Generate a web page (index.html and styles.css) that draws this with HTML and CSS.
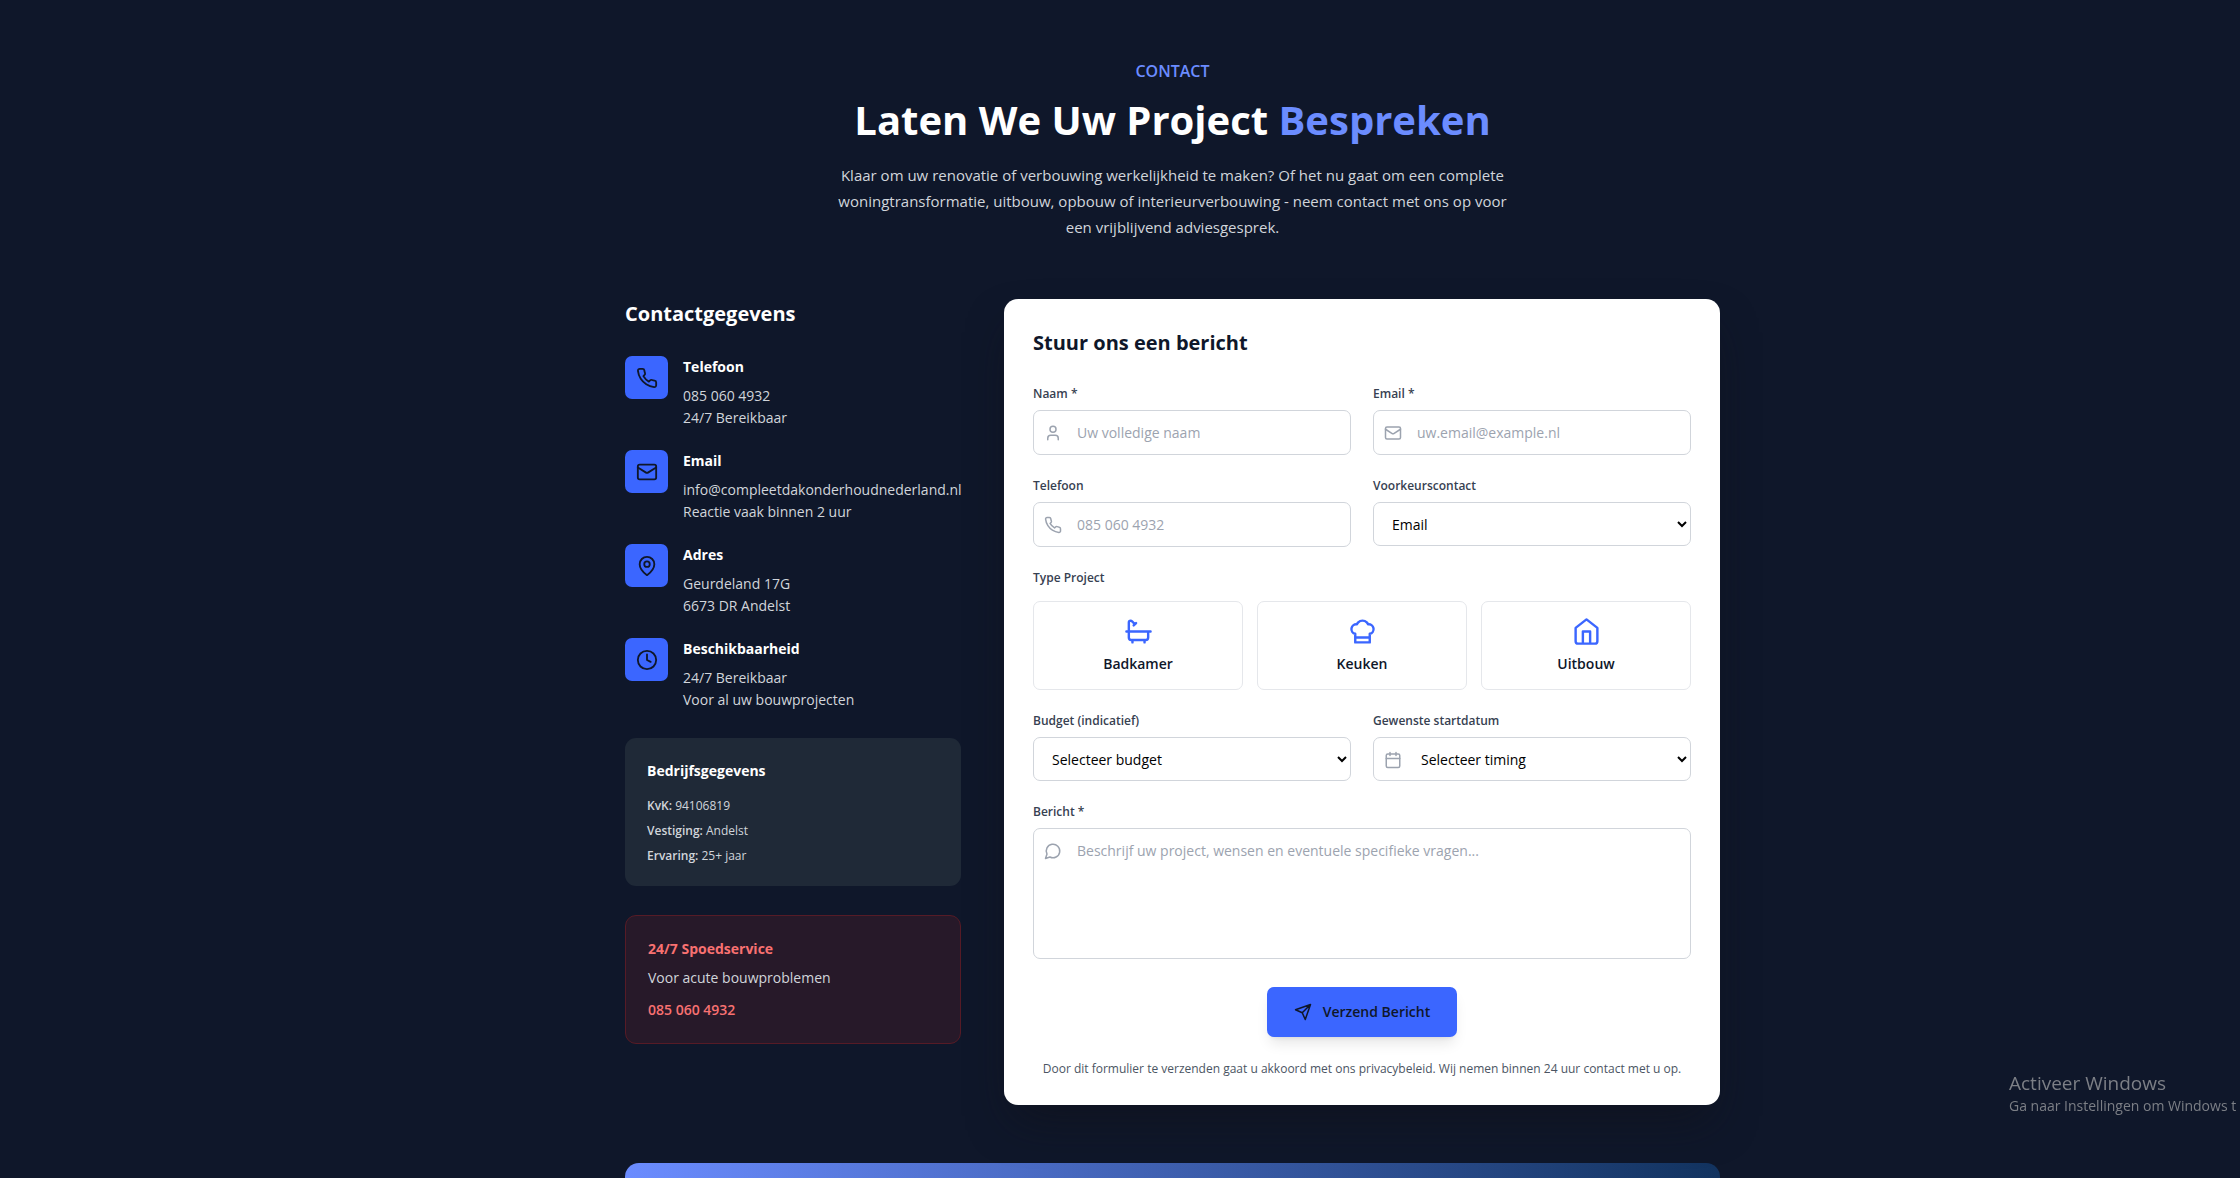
FILE: index.html
```html
<!DOCTYPE html>
<html lang="nl">
<head>
<meta charset="utf-8">
<meta name="viewport" content="width=device-width, initial-scale=1">
<title>Contact</title>
<link rel="stylesheet" href="styles.css">
</head>
<body>
<svg class="sprite" aria-hidden="true">
  <symbol id="i-phone" viewBox="0 0 24 24"><path d="M22 16.92v3a2 2 0 0 1-2.18 2 19.79 19.79 0 0 1-8.63-3.07 19.5 19.5 0 0 1-6-6 19.79 19.79 0 0 1-3.07-8.67A2 2 0 0 1 4.11 2h3a2 2 0 0 1 2 1.72 12.84 12.84 0 0 0 .7 2.81 2 2 0 0 1-.45 2.11L8.09 9.91a16 16 0 0 0 6 6l1.27-1.27a2 2 0 0 1 2.11-.45 12.84 12.84 0 0 0 2.81.7A2 2 0 0 1 22 16.92z"/></symbol>
  <symbol id="i-mail" viewBox="0 0 24 24"><rect x="2" y="4" width="20" height="16" rx="2"/><path d="m22 7-8.97 5.7a1.94 1.94 0 0 1-2.06 0L2 7"/></symbol>
  <symbol id="i-pin" viewBox="0 0 24 24"><path d="M20 10c0 6-8 12-8 12s-8-6-8-12a8 8 0 0 1 16 0Z"/><circle cx="12" cy="10" r="3"/></symbol>
  <symbol id="i-clock" viewBox="0 0 24 24"><circle cx="12" cy="12" r="10"/><path d="M12 6v6l4 2"/></symbol>
  <symbol id="i-user" viewBox="0 0 24 24"><path d="M19 21v-2a4 4 0 0 0-4-4H9a4 4 0 0 0-4 4v2"/><circle cx="12" cy="7" r="4"/></symbol>
  <symbol id="i-calendar" viewBox="0 0 24 24"><rect x="3" y="4" width="18" height="18" rx="2"/><path d="M16 2v4M8 2v4M3 10h18"/></symbol>
  <symbol id="i-message" viewBox="0 0 24 24"><path d="M7.9 20A9 9 0 1 0 4 16.1L2 22Z"/></symbol>
  <symbol id="i-bath" viewBox="0 0 24 24"><path d="M9 6 6.5 3.5a1.5 1.5 0 0 0-1-.5C4.683 3 4 3.683 4 4.5V17a2 2 0 0 0 2 2h12a2 2 0 0 0 2-2v-5M10 5 8 7M2 12h20M7 19v2M17 19v2"/></symbol>
  <symbol id="i-chef" viewBox="0 0 24 24"><path d="M6 13.87A4 4 0 0 1 7.41 6a5.11 5.11 0 0 1 1.05-1.54 5 5 0 0 1 7.08 0A5.11 5.11 0 0 1 16.59 6 4 4 0 0 1 18 13.87V21H6ZM6 17h12"/></symbol>
  <symbol id="i-home" viewBox="0 0 24 24"><path d="m3 9 9-7 9 7v11a2 2 0 0 1-2 2H5a2 2 0 0 1-2-2zM9 22V12h6v10"/></symbol>
  <symbol id="i-send" viewBox="0 0 24 24"><path d="m22 2-7 20-4-9-9-4ZM22 2 11 13"/></symbol>
</svg>

<main class="page">
  <header class="intro">
    <p class="eyebrow">CONTACT</p>
    <h1 class="title">Laten We Uw Project <span class="accent">Bespreken</span></h1>
    <p class="lead">Klaar om uw renovatie of verbouwing werkelijkheid te maken? Of het nu gaat om een complete woningtransformatie, uitbouw, opbouw of interieurverbouwing - neem contact met ons op voor een vrijblijvend adviesgesprek.</p>
  </header>

  <div class="columns">
    <section class="info">
      <h2 class="heading">Contactgegevens</h2>
      <ul class="contacts">
        <li class="contact">
          <span class="badge"><svg class="icon icon-md"><use href="#i-phone"/></svg></span>
          <div><h3 class="contact-title">Telefoon</h3><p>085 060 4932</p><p>24/7 Bereikbaar</p></div>
        </li>
        <li class="contact">
          <span class="badge"><svg class="icon icon-md"><use href="#i-mail"/></svg></span>
          <div><h3 class="contact-title">Email</h3><p>info@compleetdakonderhoudnederland.nl</p><p>Reactie vaak binnen 2 uur</p></div>
        </li>
        <li class="contact">
          <span class="badge"><svg class="icon icon-md"><use href="#i-pin"/></svg></span>
          <div><h3 class="contact-title">Adres</h3><p>Geurdeland 17G</p><p>6673 DR Andelst</p></div>
        </li>
        <li class="contact">
          <span class="badge"><svg class="icon icon-md"><use href="#i-clock"/></svg></span>
          <div><h3 class="contact-title">Beschikbaarheid</h3><p>24/7 Bereikbaar</p><p>Voor al uw bouwprojecten</p></div>
        </li>
      </ul>

      <div class="company">
        <h3 class="company-title">Bedrijfsgegevens</h3>
        <p><strong>KvK:</strong> 94106819</p>
        <p><strong>Vestiging:</strong> Andelst</p>
        <p><strong>Ervaring:</strong> 25+ jaar</p>
      </div>

      <div class="urgent">
        <h3 class="urgent-title">24/7 Spoedservice</h3>
        <p class="urgent-text">Voor acute bouwproblemen</p>
        <a class="urgent-phone" href="tel:0850604932">085 060 4932</a>
      </div>
    </section>

    <form class="card">
      <h2 class="heading">Stuur ons een bericht</h2>
      <div class="fields">
        <div class="field">
          <label for="naam">Naam *</label>
          <div class="control"><svg class="icon icon-sm"><use href="#i-user"/></svg><input class="box with-icon" id="naam" type="text" placeholder="Uw volledige naam"></div>
        </div>
        <div class="field">
          <label for="email">Email *</label>
          <div class="control"><svg class="icon icon-sm"><use href="#i-mail"/></svg><input class="box with-icon" id="email" type="email" placeholder="uw.email@example.nl"></div>
        </div>
        <div class="field">
          <label for="telefoon">Telefoon</label>
          <div class="control"><svg class="icon icon-sm"><use href="#i-phone"/></svg><input class="box with-icon" id="telefoon" type="tel" placeholder="085 060 4932"></div>
        </div>
        <div class="field">
          <label for="voorkeur">Voorkeurscontact</label>
          <select class="box" id="voorkeur"><option>Email</option><option>Telefoon</option></select>
        </div>
        <fieldset class="types">
          <legend>Type Project</legend>
          <div class="type-row">
            <button class="type" type="button"><svg class="icon icon-lg"><use href="#i-bath"/></svg>Badkamer</button>
            <button class="type" type="button"><svg class="icon icon-lg"><use href="#i-chef"/></svg>Keuken</button>
            <button class="type" type="button"><svg class="icon icon-lg"><use href="#i-home"/></svg>Uitbouw</button>
          </div>
        </fieldset>
        <div class="field">
          <label for="budget">Budget (indicatief)</label>
          <select class="box" id="budget"><option>Selecteer budget</option></select>
        </div>
        <div class="field">
          <label for="start">Gewenste startdatum</label>
          <div class="control"><svg class="icon icon-sm"><use href="#i-calendar"/></svg><select class="box with-icon" id="start"><option>Selecteer timing</option></select></div>
        </div>
        <div class="field wide">
          <label for="bericht">Bericht *</label>
          <div class="control"><svg class="icon icon-sm"><use href="#i-message"/></svg><textarea class="box with-icon" id="bericht" rows="5" placeholder="Beschrijf uw project, wensen en eventuele specifieke vragen..."></textarea></div>
        </div>
      </div>
      <button class="submit" type="submit"><svg class="icon icon-sm"><use href="#i-send"/></svg>Verzend Bericht</button>
      <p class="note">Door dit formulier te verzenden gaat u akkoord met ons privacybeleid. Wij nemen binnen 24 uur contact met u op.</p>
    </form>
  </div>

  <section class="banner"></section>
</main>

<aside class="watermark">
  <p class="watermark-title">Activeer Windows</p>
  <p class="watermark-text">Ga naar Instellingen om Windows t</p>
</aside>
</body>
</html>
```
FILE: styles.css
```css
* {
  box-sizing: border-box;
}

html {
  height: 100%;
}

body {
  margin: 0;
  height: 100%;
  overflow: hidden;
  background: #0f172a;
  color: #d1d5db;
  font-family: "Open Sans", "Noto Sans", sans-serif;
  font-size: 14px;
  line-height: 22px;
}

h1, h2, h3, p, ul, fieldset {
  margin: 0;
  padding: 0;
}

input, select, textarea, button {
  font: inherit;
}

.sprite {
  display: none;
}

.icon {
  flex: none;
  fill: none;
  stroke: currentColor;
  stroke-width: 2;
  stroke-linecap: round;
  stroke-linejoin: round;
}

.icon-sm {
  width: 18px;
  height: 18px;
}

.icon-md {
  width: 22px;
  height: 22px;
}

.icon-lg {
  width: 29px;
  height: 29px;
}

.page {
  padding: 58px 0 0 105px;
}

.intro,
.columns,
.banner {
  max-width: 1095px;
  margin: 0 auto;
}

.intro {
  max-width: 691px;
  margin-bottom: 59px;
  text-align: center;
}

.eyebrow {
  margin-bottom: 14px;
  color: #6b8cff;
  font-size: 16px;
  line-height: 26px;
  font-weight: 600;
}

.title {
  margin-bottom: 20px;
  color: #fff;
  font-size: 40px;
  line-height: 44px;
  font-weight: 700;
}

.accent {
  color: #6b8cff;
}

.lead {
  font-size: 15px;
  line-height: 26px;
}

.columns {
  display: grid;
  grid-template-columns: minmax(0, 336fr) minmax(0, 716fr);
  gap: 43px;
  align-items: start;
}

.heading {
  margin-bottom: 28px;
  font-size: 20px;
  line-height: 29px;
  font-weight: 700;
}

.info .heading,
.contact-title,
.company-title {
  color: #fff;
}

.contact-title,
.company-title,
.urgent-title {
  font-size: 14px;
  font-weight: 700;
}

.contacts {
  display: grid;
  gap: 21px;
  margin-bottom: 27px;
  list-style: none;
}

.contact {
  display: flex;
  gap: 15px;
}

.contact-title {
  margin-bottom: 7px;
}

.badge {
  display: flex;
  flex: none;
  align-items: center;
  justify-content: center;
  width: 43px;
  height: 43px;
  border-radius: 7px;
  background: #3b66ff;
  color: #0f172a;
}

.company {
  display: grid;
  gap: 7px;
  margin-bottom: 29px;
  padding: 22px 22px 21px;
  border-radius: 11px;
  background: #1f2937;
  font-size: 12px;
  line-height: 18px;
}

.company-title {
  margin-bottom: 8px;
  line-height: 22px;
}

.company strong {
  font-weight: 600;
}

.urgent {
  padding: 22px;
  border: 1px solid #561b26;
  border-radius: 11px;
  background: #271929;
}

.urgent-title {
  margin-bottom: 7px;
}

.urgent-text {
  margin-bottom: 10px;
}

.urgent-title,
.urgent-phone {
  color: #f87171;
}

.urgent-phone {
  display: block;
  font-weight: 600;
  text-decoration: none;
}

.card {
  padding: 29px 29px 27px;
  border-radius: 14px;
  background: #fff;
  color: #0f172a;
  box-shadow: 0 22px 45px -11px rgba(16, 16, 24, 0.6);
}

.fields {
  display: grid;
  grid-template-columns: 1fr 1fr;
  gap: 22px;
  align-items: start;
  margin-bottom: 28px;
}

.wide,
.types {
  grid-column: 1 / -1;
}

.field label,
.types legend {
  display: block;
  margin-bottom: 7px;
  padding: 0;
  color: #374151;
  font-size: 12px;
  line-height: 18px;
  font-weight: 600;
}

.types {
  min-width: 0;
  border: 0;
}

.types legend {
  margin-bottom: 14px;
}

.control {
  position: relative;
}

.control .icon {
  position: absolute;
  top: 14px;
  left: 11px;
  color: #9ca3af;
}

.box {
  display: block;
  width: 100%;
  height: 45px;
  padding: 10px 14px;
  border: 1px solid #d1d5db;
  border-radius: 7px;
  background: #fff;
  color: #000;
}

select.box {
  height: 44px;
}

.with-icon {
  padding-left: 43px;
}

textarea.box {
  height: 131px;
  padding-top: 11px;
  resize: none;
}

.box::placeholder {
  color: #9ca3af;
}

.type-row {
  display: grid;
  grid-template-columns: repeat(3, 1fr);
  gap: 14px;
}

.type {
  display: flex;
  flex-direction: column;
  align-items: center;
  gap: 7px;
  padding: 15px 15px 14px;
  border: 1px solid #e5e7eb;
  border-radius: 7px;
  background: #fff;
  color: #0f172a;
  font-weight: 600;
}

.type .icon {
  color: #3b66ff;
}

.submit {
  display: flex;
  align-items: center;
  gap: 11px;
  margin: 0 auto 23px;
  padding: 14px 27px;
  border: 0;
  border-radius: 7px;
  background: #3b66ff;
  color: #0f172a;
  font-weight: 600;
  box-shadow: 0 9px 14px -3px rgba(0, 0, 0, 0.1), 0 4px 5px -4px rgba(0, 0, 0, 0.1);
}

.note {
  color: #4b5563;
  font-size: 12px;
  line-height: 18px;
  text-align: center;
}

.banner {
  height: 220px;
  margin-top: 58px;
  border-radius: 14px;
  background: linear-gradient(to right, #6b8cff, #12335f);
}

.watermark {
  position: fixed;
  right: 0;
  bottom: 62px;
  width: 231px;
  color: #7c7f86;
  white-space: nowrap;
}

.watermark-title {
  font-size: 19px;
  line-height: 25px;
}

.watermark-text {
  font-size: 14px;
  line-height: 20px;
}
```
